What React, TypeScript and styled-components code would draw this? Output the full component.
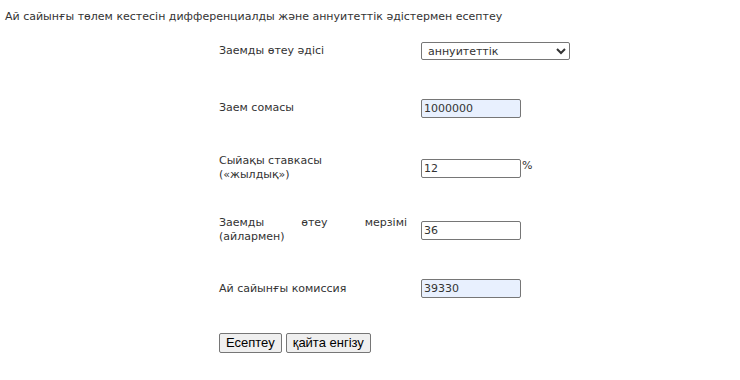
import styled, { createGlobalStyle } from "styled-components";

const GlobalStyle = createGlobalStyle`
  html, body {
    margin: 0;
    padding: 0;
    background: #ffffff;
  }
  body {
    font-family: "DejaVu Sans", Verdana, sans-serif;
    color: #333333;
  }
`;

const Page = styled.div`
  padding: 10px 5px 0;
`;

const Title = styled.div`
  font-size: 11px;
  line-height: 14px;
  color: #333333;
`;

const Form = styled.form`
  display: grid;
  grid-template-columns: 188px auto;
  grid-template-rows: 56px 58px 62px 62px 55px 53px;
  column-gap: 14px;
  align-items: center;
  margin: -1px 0 0 214px;
`;

const Label = styled.div`
  font-size: 11px;
  line-height: 14px;
  text-align: justify;
  text-align-last: left;
`;

const Field = styled.div`
  display: flex;
  align-items: center;
`;

const Select = styled.select`
  width: 149px;
  height: 18px;
  font-family: "DejaVu Sans", Verdana, sans-serif;
  font-size: 11px;
  color: #333333;
  border: 1px solid #767676;
  border-radius: 2px;
  background: #ffffff;
  padding: 0 2px;
`;

const Input = styled.input<{ $filled?: boolean }>`
  box-sizing: border-box;
  width: 100px;
  height: 19px;
  font-family: "DejaVu Sans", Verdana, sans-serif;
  font-size: 11px;
  color: #333333;
  border: 1px solid #767676;
  border-radius: 2px;
  padding: 0 2px;
  background: ${(p) => (p.$filled ? "#e8f0fe" : "#ffffff")};
`;

const Unit = styled.span`
  font-size: 11px;
  margin-left: 1px;
  align-self: flex-start;
`;

const Buttons = styled.div`
  grid-column: 1 / -1;
  display: flex;
  gap: 4px;
`;

const Button = styled.button`
  height: 20px;
  font-family: "Liberation Sans", Arial, sans-serif;
  font-size: 13px;
  color: #000000;
  background: #efefef;
  border: 1px solid #767676;
  border-radius: 2px;
  padding: 0 6px;
`;

export default function App() {
  return (
    <Page>
      <GlobalStyle />
      <Title>
        Ай сайынғы төлем кестесін дифференциалды және аннуитеттік әдістермен
        есептеу
      </Title>
      <Form onSubmit={(e) => e.preventDefault()}>
        <Label>Заемды өтеу әдісі</Label>
        <Field>
          <Select defaultValue="ann">
            <option value="ann">аннуитеттік</option>
            <option value="diff">дифференциалды</option>
          </Select>
        </Field>

        <Label>Заем сомасы</Label>
        <Field>
          <Input $filled defaultValue="1000000" />
        </Field>

        <Label>
          Сыйақы ставкасы
          <br />
          («жылдық»)
        </Label>
        <Field>
          <Input defaultValue="12" />
          <Unit>%</Unit>
        </Field>

        <Label>Заемды өтеу мерзімі (айлармен)</Label>
        <Field>
          <Input defaultValue="36" />
        </Field>

        <Label>Ай сайынғы комиссия</Label>
        <Field>
          <Input $filled defaultValue="39330" />
        </Field>

        <Buttons>
          <Button type="submit">Есептеу</Button>
          <Button type="reset">қайта енгізу</Button>
        </Buttons>
      </Form>
    </Page>
  );
}
